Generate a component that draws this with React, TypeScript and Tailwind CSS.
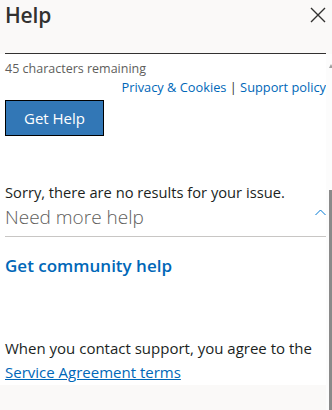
import { FC } from 'react';

const font = { fontFamily: '"Segoe UI", "Open Sans", "Noto Sans", sans-serif' };

const CloseIcon: FC = () => (
  <svg width="16" height="16" viewBox="0 0 16 16" className="text-[#323130]">
    <path d="M1 1 L15 15 M15 1 L1 15" stroke="currentColor" strokeWidth="1.4" fill="none" />
  </svg>
);

const ChevronUp: FC = () => (
  <svg width="11" height="7" viewBox="0 0 11 7" className="text-[#0078d4]">
    <path d="M0.5 6 L5.5 1 L10.5 6" stroke="currentColor" strokeWidth="1" fill="none" />
  </svg>
);

export default function App() {
  return (
    <div className="w-[332px] h-[410px] overflow-hidden bg-white flex flex-col text-[#323130]" style={font}>
      {/* header + clipped input */}
      <div className="h-[54px] bg-[#faf9f8] flex flex-col">
        <div className="flex items-start justify-between pl-[5px] pr-[6px] pt-[1px]">
          <h1 className="text-[21px] leading-[28px] font-semibold tracking-[-0.2px]">Help</h1>
          <div className="pt-[6px]">
            <CloseIcon />
          </div>
        </div>
        <div className="mt-auto ml-[5px] mr-[6px] border-b border-[#323130]" />
      </div>

      <div className="flex flex-1 min-h-0">
        <div className="w-[326px] flex flex-col">
          <div className="bg-white flex flex-col pl-[5px] h-[331px]">
            <p className="text-[12.5px] leading-[16px] text-[#605e5c] mt-[7px]">45 characters remaining</p>
            <p className="mt-[2px] text-[12.8px] leading-[16px] text-right text-[#0067b8] whitespace-nowrap">
              Privacy &amp; Cookies <span className="text-[#323130]">|</span> Support policy
            </p>
            <button className="mt-[5px] w-[99px] h-[36px] bg-[#3277b6] border border-black text-white text-[15px]">
              Get Help
            </button>
            <p className="mt-[46px] text-[14.7px] leading-[20px] text-[#201f1e]">
              Sorry, there are no results for your issue.
            </p>
            <div className="flex items-start justify-between border-b border-[#c8c6c4] h-[35px] pt-[2px]">
              <span className="text-[19px] leading-[26px] font-light text-[#605e5c]">Need more help</span>
              <div className="pt-[5px]">
                <ChevronUp />
              </div>
            </div>
            <a className="mt-[17px] text-[17px] leading-[24px] font-semibold text-[#0067b8]">Get community help</a>
            <p className="mt-[58px] text-[15px] leading-[24px] text-[#201f1e]">
              When you contact support, you agree to the
            </p>
            <a className="text-[15px] leading-[24px] text-[#0067b8] underline">Service Agreement terms</a>
          </div>
          <div className="flex-1 bg-[#faf9f8]" />
        </div>
        {/* scrollbar */}
        <div className="w-[6px] relative bg-[#fcfcfc]">
          <div className="ml-[3px] mt-[10px] w-0 h-0 border-l-[2px] border-r-[2px] border-b-[4px] border-l-transparent border-r-transparent border-b-[#a0a0a0]" />
          <div className="absolute left-[3px] top-[136px] bottom-0 w-[3px] bg-[#8a8a8a]" />
        </div>
      </div>
    </div>
  );
}
